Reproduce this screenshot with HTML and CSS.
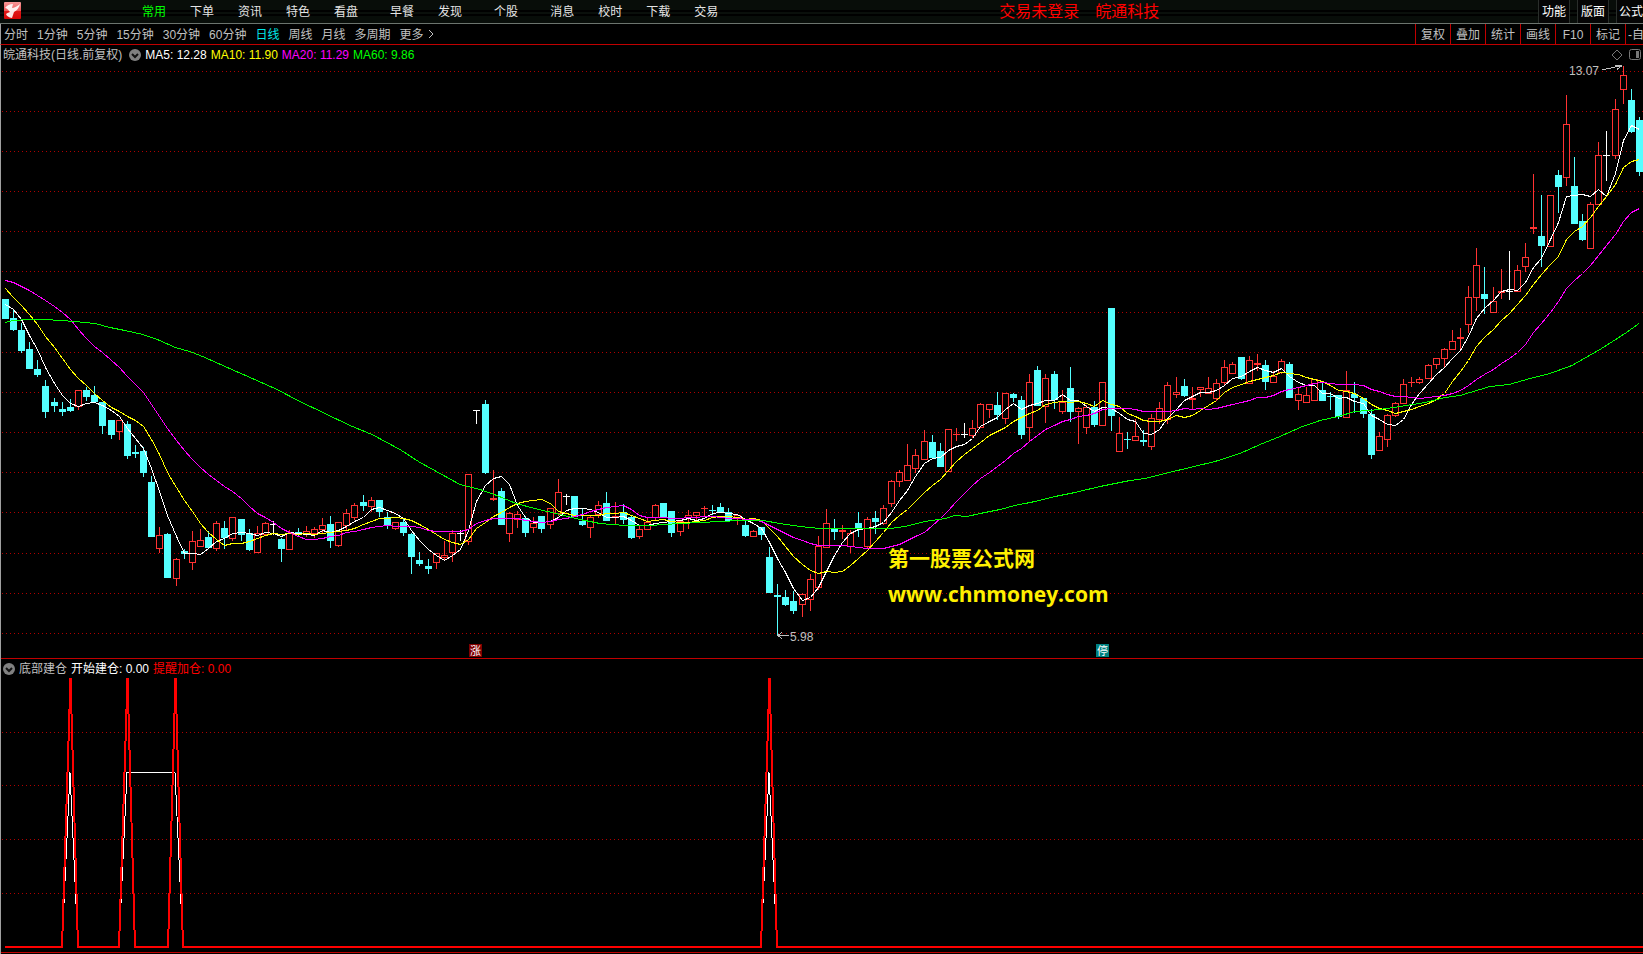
FILE: index.html
```html
<!DOCTYPE html>
<html lang="zh-CN">
<head>
<meta charset="utf-8">
<title>皖通科技 日线</title>
<link rel="stylesheet" href="styles.css">
</head>
<body>
<header class="topbar">
  <svg class="logo" viewBox="0 0 17 17" role="img" aria-label="logo">
    <defs><linearGradient id="lg" x1="0" y1="0" x2="0" y2="1"><stop offset="0" stop-color="#f79a9a"/><stop offset=".5" stop-color="#ee5a5a"/><stop offset=".55" stop-color="#e01818"/><stop offset="1" stop-color="#d80808"/></linearGradient></defs>
    <rect width="17" height="17" rx="1" fill="url(#lg)"/>
    <path d="M1 6 Q4 2 9 2 L8 6 Q11 6 16 2 Q15 7 10 10 L8 16 Q3 15 2 12 Q3 11 6 10 Q3 6 1 6Z" fill="#fff" opacity=".9"/>
  </svg>
  <nav class="menu">
    <button class="on">常用</button><button>下单</button><button>资讯</button><button>特色</button><button>看盘</button>
    <button class="group">早餐</button><button>发现</button>
    <button class="group">个股</button>
    <button class="group">消息</button><button>校时</button><button>下载</button><button>交易</button>
  </nav>
  <div class="status"><span>交易未登录</span><span>皖通科技</span></div>
  <div class="panels"><button>功能</button><button>版面</button><button>公式</button></div>
</header>
<div class="toolbar">
  <nav class="periods">
    <button>分时</button><button>1分钟</button><button>5分钟</button><button>15分钟</button><button>30分钟</button><button>60分钟</button><button class="on">日线</button><button>周线</button><button>月线</button><button>多周期</button>
    <button class="more">更多<svg viewBox="0 0 6 10"><path d="M1 1 L5 5 L1 9"/></svg></button>
  </nav>
  <div class="tools"><button>复权</button><button>叠加</button><button>统计</button><button>画线</button><button>F10</button><button>标记</button><button class="cut">-自</button></div>
</div>
<main>
  <section class="panel">
    <div class="legend">
      <span class="name">皖通科技(日线.前复权)</span>
      <svg class="drop" viewBox="0 0 12 12"><circle cx="6" cy="6" r="6"/><path d="M3 5 L6 8 L9 5"/></svg>
      <span class="white">MA5: 12.28</span><span class="yellow">MA10: 11.90</span><span class="magenta">MA20: 11.29</span><span class="green">MA60: 9.86</span>
      <svg class="tags" viewBox="0 0 30 12"><path d="M6 1 L11 6 L6 11 L1 6Z"/><rect x="18.500" y=".5" width="11" height="10" rx="2"/><rect class="solid" x="25" y="2" width="3" height="7"/></svg>
    </div>
    <svg class="chart" id="price" viewBox="1 64 1642 594">
      <g id="grid1" class="grid"></g>
      <g id="candles"></g>
      <g id="averages"></g>
      <text class="mark" x="1569" y="75">13.07</text>
      <path class="arrow" d="M1602 70 L1622 65.500 M1615 65.500 H1622 M1617 69.500 L1622 65.500"/>
      <text class="mark" x="790" y="641">5.98</text>
      <path class="arrow" d="M778 635.500 H789 M782 632 L778 635.500 L782 639"/>
      <text class="site" x="888" y="566">第一股票公式网</text>
      <text class="site url" x="888" y="602">www.chnmoney.com</text>
      <rect class="up" x="469" y="644" width="13" height="13"/><text class="badge" x="470" y="655">涨</text>
      <rect class="halt" x="1096" y="644" width="13" height="13"/><text class="badge" x="1097" y="655">停</text>
    </svg>
  </section>
  <section class="panel">
    <div class="legend lower">
      <svg class="drop" viewBox="0 0 12 12"><circle cx="6" cy="6" r="6"/><path d="M3 5 L6 8 L9 5"/></svg>
      <span class="name">底部建仓</span><span class="white">开始建仓: 0.00</span><span class="red">提醒加仓: 0.00</span>
    </div>
    <svg class="chart" id="signal" viewBox="1 678 1642 276">
      <g id="grid2" class="grid"></g>
      <path class="start" d="M62 947 L70 772.500 L78 947 M119 947 L127 772.500 H175 L183 947 M761 947 L769 772.500 L777 947"/>
      <path class="add" d="M5 947 H62 L70.500 678 L78 947 H119 L127.500 678 L135 947 H168 L175.500 678 L183 947 H761 L769.500 678 L777 947 H1643"/>
      <path class="axis" d="M0 952.500 H1643"/>
    </svg>
  </section>
</main>
<script src="chart.js"></script>
</body>
</html>
```
FILE: styles.css
```css
* { box-sizing: border-box; }
body {
  margin: 0;
  background: #000;
  color: #c0c0c0;
  font: 12px/18px "Liberation Sans", "Noto Sans CJK SC", sans-serif;
  overflow: hidden;
}
button {
  margin: 0;
  padding: 0;
  border: 0;
  background: none;
  color: inherit;
  font: inherit;
  white-space: nowrap;
}
.topbar {
  display: flex;
  height: 24px;
  border-bottom: 1px solid #6c746e;
  background: linear-gradient(#080d09 0 10px, #000 10px 12px, #0a0f0b 12px 14px, #000 14px 16px, #080d09 16px);
  color: #e4e4e4;
}
.logo { width: 17px; height: 17px; margin: 2px 0 0 4px; }
.menu {
  display: flex;
  gap: 24px;
  padding-left: 121px;
  align-items: center;
}
.menu .group { margin-left: 8px; }
.menu .on { color: #0f0; }
.status {
  display: flex;
  gap: 16px;
  align-items: center;
  padding-left: 281px;
  color: #f00;
  font-size: 16px;
  white-space: nowrap;
}
.panels {
  display: flex;
  gap: 7px;
  margin-left: auto;
  color: #fff;
}
.panels button {
  padding: 0 3px;
  border: solid #2a2e2b;
  border-width: 0 1px;
  background: #050505;
}
.panels button:last-child { padding: 0 0 0 2px; border-right: 0; }
.toolbar {
  display: flex;
  justify-content: space-between;
  height: 21px;
  border-bottom: 1px solid #c00000;
  border-left: 1px solid #a0a0a0;
}
.periods {
  display: flex;
  gap: 9px;
  padding: 2px 0 0 3px;
  align-items: center;
}
.periods .on { color: #00e8e8; }
.more svg {
  width: 6px;
  height: 10px;
  margin-left: 4px;
  fill: none;
  stroke: #c0c0c0;
}
.tools { display: flex; }
.tools button { width: 35px; padding-top: 2px; border-left: 1px solid #c00000; }
.tools .cut { width: 18px; padding-left: 2px; overflow: hidden; text-align: left; }
main { border-left: 1px solid #a0a0a0; }
.panel + .panel { border-top: 1px solid #c00000; }
.legend {
  display: flex;
  gap: 4px;
  height: 19px;
  padding-left: 2px;
  align-items: center;
  white-space: nowrap;
}
.name + .drop { margin: 0 0 0 3px; }
.drop { width: 12px; height: 12px; fill: #808080; }
.drop path { fill: none; stroke: #111; stroke-width: 2; }
.tags {
  width: 30px;
  height: 12px;
  margin: 0 2px 0 auto;
  fill: none;
  stroke: #777;
}
.tags .solid { fill: #777; stroke: none; }
.white { color: #fff; }
.yellow { color: #ff0; }
.magenta { color: #f0f; }
.green { color: #0f0; }
.red { color: #f00; }
.chart { display: block; width: 100%; height: auto; }
.chart path, .chart rect { shape-rendering: crispEdges; }
.grid path { stroke: #b00000; stroke-dasharray: 1 3; fill: none; }
.body-up { fill: #ff3232; }
.hollow { fill: #000; }
.body-down { fill: #54ffff; }
.body-flat { fill: #fff; }
.ma { fill: none; stroke-width: 1; }
.ma5 { stroke: #fff; }
.ma10 { stroke: #ff0; }
.ma20 { stroke: #f0f; }
.ma60 { stroke: #0f0; }
.mark { fill: #c0c0c0; font-size: 12px; }
.arrow { fill: none; stroke: #c0c0c0; }
.site { fill: #fff000; font: bold 21px "Noto Sans CJK SC", sans-serif; }
.url { font: bold 21px "Open Sans", sans-serif; }
.badge { fill: #fff; font-size: 11px; }
.up { fill: #800000; }
.halt { fill: #008080; }
.start { fill: none; stroke: #fff; }
.add { fill: none; stroke: #f00; stroke-width: 2; }
.axis { stroke: #c00000; }
```
FILE: chart.js
```js
// One candle per entry: kind, high, body top, body bottom, low.
// R rising, C falling, W unchanged.
const raw = `C299,299,319,319 C309,318,330,331 C323,330,351,353 C342,349,369,369 C360,369,375,377 C380,386,412,418 C398,402,406,412 C402,409,412,416 C399,407,411,412 R390,390,407,410
C387,390,397,401 C386,395,402,402 C402,402,426,434 C420,420,435,439 R420,420,432,440 C421,424,456,459 C445,452,454,458 C447,451,473,477 C476,482,537,537 R527,535,549,553
C533,534,578,578 R558,559,579,586 C549,551,554,559 R531,541,563,570 R529,540,547,547 C531,537,548,548 R521,523,549,551 C521,528,538,549 R517,517,539,541 C519,519,535,541
C529,533,550,551 R526,533,553,553 R522,523,535,536 W521,524,525,535 C538,539,549,562 R530,533,550,550 C528,532,534,536 R526,531,534,537 R527,529,534,538 R518,525,530,533
C516,524,541,548 R522,522,546,547 R509,513,526,530 R503,505,518,520 C495,502,506,511 R497,500,507,512 C500,500,512,517 C512,517,525,529 R522,522,529,530 C518,522,533,536
C533,534,557,574 C552,560,564,566 C559,566,569,574 R553,553,563,569 R541,555,558,560 R530,533,553,562 W530,533,534,541 R474,474,542,545 W410,410,411,424 C400,404,473,474
R470,498,500,501 C488,491,525,525 R512,513,534,542 R511,514,520,528 C516,518,533,537 R517,523,528,533 C516,516,529,533 R508,508,525,529 R479,492,514,516 W494,496,497,505
C496,496,517,517 C509,521,525,526 R515,517,528,538 R501,505,515,518 C492,503,521,521 R502,516,517,524 C504,512,520,524 C516,517,538,539 R526,529,537,539 R518,522,530,530
R504,505,518,521 C503,503,517,517 C511,511,533,537 R521,521,532,536 R510,515,518,529 R512,512,516,520 R506,508,509,516 C505,510,511,515 C503,507,513,513 C508,512,521,522
R515,515,518,525 C521,525,536,537 R530,531,537,537 C527,527,535,540 C547,557,593,593 C584,595,597,636 C590,597,605,606 C591,601,611,614 R593,594,605,617 R574,579,600,611
R536,546,588,590 R509,523,548,548 C519,529,532,540 R525,530,532,539 R530,533,547,553 C512,523,528,537 R517,519,547,548 C511,518,522,534 R505,508,524,525 R480,481,504,507
R470,472,482,487 R444,465,481,481 R449,455,469,473 R430,441,460,460 C435,442,458,458 C443,451,467,467 R429,429,472,472 R428,434,435,441 W423,434,435,438 R420,428,436,438
R403,404,428,428 R404,404,410,418 C392,405,415,420 R393,393,419,424 C393,394,398,402 C396,400,435,439 R374,382,428,442 C366,370,406,406 R374,378,407,423 C371,374,400,409
R390,402,412,414 C367,388,412,422 R407,408,412,444 R405,407,428,434 C401,407,425,427 R382,382,426,426 C308,308,416,431 R417,433,452,452 C432,439,440,449 R419,436,441,441
C430,440,442,446 R414,418,447,450 R402,408,420,424 R382,385,420,424 R377,392,395,398 C379,386,396,397 R387,398,400,409 R387,387,390,397 R377,388,394,394 R379,383,399,401
R360,367,383,385 R362,364,374,374 C357,357,379,380 R356,360,384,384 R354,363,365,371 C360,365,382,390 R371,376,383,383 R359,361,373,374 C362,364,398,398 R388,394,401,410
R387,395,403,403 R379,379,401,401 C382,390,401,401 C392,396,397,410 C395,395,417,419 R371,390,418,418 C382,394,398,413 C398,398,414,418 C409,414,455,459 R432,436,451,451
R414,415,440,447 R402,403,416,417 R379,384,404,404 R377,382,383,387 R377,379,383,384 R364,365,379,379 R358,358,365,369 R348,349,359,367 R330,341,350,350 R328,337,339,349
R286,297,325,333 R248,265,298,311 C267,294,299,314 R287,301,313,313 R269,291,293,299 W251,291,292,300 R265,270,292,292 R243,257,267,272 R174,227,229,234 C195,236,246,267
R195,195,247,247 C170,175,187,213 R95,124,178,186 C157,186,224,224 C214,221,240,241 R202,204,249,249 R142,155,205,205 W131,155,156,181 R99,109,156,159 R66,75,90,104
C89,100,132,133 C117,120,172,176`;

const candles = raw.split(/\s+/).map(s => [s[0], ...s.slice(1).split(',').map(Number)]);
const xAt = i => Math.floor(5.33 + 8.13 * i);
const box = (x, y, w, h) => `M${x} ${y}h${w}v${h}h${-w}z`;
const draw = (parent, cls, d) => {
  const p = document.createElementNS('http://www.w3.org/2000/svg', 'path');
  p.setAttribute('class', cls);
  p.setAttribute('d', d);
  document.getElementById(parent).append(p);
};

const shapes = { R: '', C: '', W: '' };
let hollow = '';
candles.forEach(([kind, high, top, bottom, low], i) => {
  const x = xAt(i);
  shapes[kind] += box(x, high, 1, Math.max(low - high, 1)) + box(x - 3, top, 7, bottom - top);
  if (kind === 'R' && bottom - top > 2) hollow += box(x - 2, top + 1, 5, bottom - top - 2);
});
draw('candles', 'body-up', shapes.R);
draw('candles', 'hollow', hollow);
draw('candles', 'body-down', shapes.C);
draw('candles', 'body-flat', shapes.W);

const line = pts => 'M' + pts.map(p => p.join(' ')).join('L');
const close = candles.map(c => (c[0] === 'C' ? c[3] : c[2]));
const seeds = {
  5: [304, 309, 319, 335],
  10: [288, 297, 305, 314, 324, 336, 347, 358, 369],
  20: [280, 282, 286, 290, 295, 300, 306, 312, 319, 329, 338, 346, 352, 360, 367, 376, 384, 392, 404]
};
for (const n of [5, 10, 20]) {
  const pts = close.map((_, i) => {
    const y = i < n - 1 ? seeds[n][i] : close.slice(i - n + 1, i + 1).reduce((a, b) => a + b) / n;
    return [xAt(i) + 0.5, Math.round(y) + 0.5];
  });
  draw('averages', `ma ma${n}`, line(pts));
}
draw('averages', 'ma ma60', line([
  [5, 322], [13, 320], [30, 319], [45, 319], [60, 320], [75, 321], [95, 323], [110, 327], [125, 330], [143, 334],
  [160, 340], [175, 347], [190, 351], [205, 357], [225, 366], [257, 380], [277, 389], [300, 401], [325, 413],
  [350, 425], [372, 434], [400, 449], [420, 462], [440, 473], [460, 484], [480, 489], [497, 495], [516, 503],
  [535, 508], [560, 514], [580, 519], [600, 523], [625, 525], [650, 525], [680, 523], [700, 522], [740, 520],
  [763, 520], [780, 523], [800, 526], [820, 528], [850, 528], [890, 528], [905, 526], [925, 521], [945, 518],
  [955, 515], [967, 516], [980, 513], [1000, 509], [1015, 505], [1035, 501], [1055, 496], [1075, 492],
  [1100, 486], [1130, 480], [1145, 478], [1165, 473], [1190, 467], [1215, 461], [1240, 453], [1260, 444],
  [1280, 436], [1300, 427], [1320, 420], [1338, 416], [1355, 411], [1380, 409], [1400, 406], [1425, 402],
  [1445, 397], [1460, 395], [1490, 386], [1509, 384], [1530, 378], [1550, 373], [1572, 365], [1600, 349],
  [1625, 333], [1639, 323]
].map(([x, y]) => [x, y + 0.5])));

const rows = ys => ys.map(y => `M2 ${y + 0.5}H1643`).join('');
draw('grid1', '', rows([71, 111, 151, 191, 231, 271, 312, 352, 392, 432, 472, 512, 553, 593, 633]));
draw('grid2', '', rows([732, 785, 839, 893]));
```
